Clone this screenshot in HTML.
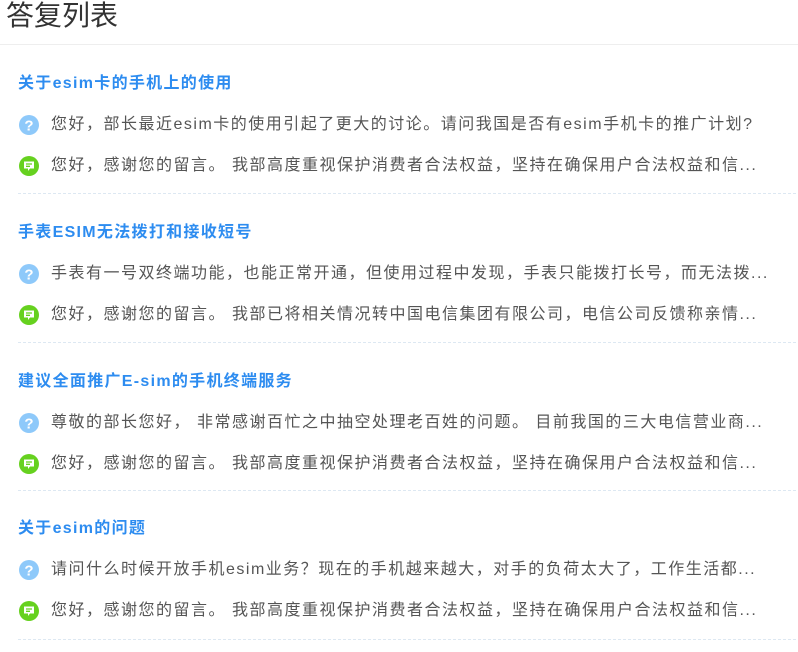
<!DOCTYPE html>
<html><head><meta charset="utf-8"><style>
*{margin:0;padding:0;box-sizing:border-box}
body{width:798px;height:652px;background:#fff;font-family:"Liberation Sans","Noto Sans CJK SC",sans-serif;position:relative;overflow:hidden}
.h{position:absolute;left:6px;top:-2px;font-size:28px;color:#333;line-height:36px}
.hl{position:absolute;left:0;top:44px;width:798px;height:1px;background:#eee}
.it{position:absolute;left:18px;width:778px;height:130px}
.t{position:absolute;left:0;top:0;font-size:16px;font-weight:bold;color:#2d8cf0;line-height:20px;white-space:nowrap;letter-spacing:1.3px}
.r{position:absolute;left:0;font-size:16px;color:#555;line-height:20px;white-space:nowrap}
.r svg{position:absolute;left:1px;top:0}
.r span{position:absolute;left:33px;top:0;letter-spacing:1.5px}
.q{top:41px}.a{top:82px}
.d{position:absolute;left:0;top:120px;width:778px;border-top:1px dashed #dde8f2}
</style></head><body>
<div class="h">答复列表</div><div class="hl"></div>

<div class="it" style="top:74px">
<div class="t">关于esim卡的手机上的使用</div>
<div class="r q"><svg width="20" height="20"><circle cx="10" cy="10" r="10" fill="#8ec9fa"/><text x="10" y="15.5" text-anchor="middle" font-size="15" font-weight="bold" fill="#fff" font-family="Liberation Sans">?</text></svg><span>您好，部长最近esim卡的使用引起了更大的讨论。请问我国是否有esim手机卡的推广计划?</span></div>
<div class="r a"><svg width="20" height="20"><circle cx="10" cy="10" r="10" fill="#66d11f"/><path d="M5 5.5h10v7h-4l-2 2.5v-2.5h-4z" fill="#fff"/><path d="M7 8h6M7 10.3h4" stroke="#66d11f" stroke-width="1.3"/></svg><span>您好，感谢您的留言。 我部高度重视保护消费者合法权益，坚持在确保用户合法权益和信...</span></div>
<div class="d" style="top:119px"></div>
</div>

<div class="it" style="top:223px">
<div class="t">手表ESIM无法拨打和接收短号</div>
<div class="r q"><svg width="20" height="20"><circle cx="10" cy="10" r="10" fill="#8ec9fa"/><text x="10" y="15.5" text-anchor="middle" font-size="15" font-weight="bold" fill="#fff" font-family="Liberation Sans">?</text></svg><span>手表有一号双终端功能，也能正常开通，但使用过程中发现，手表只能拨打长号，而无法拨...</span></div>
<div class="r a"><svg width="20" height="20"><circle cx="10" cy="10" r="10" fill="#66d11f"/><path d="M5 5.5h10v7h-4l-2 2.5v-2.5h-4z" fill="#fff"/><path d="M7 8h6M7 10.3h4" stroke="#66d11f" stroke-width="1.3"/></svg><span>您好，感谢您的留言。 我部已将相关情况转中国电信集团有限公司，电信公司反馈称亲情...</span></div>
<div class="d" style="top:119px"></div>
</div>

<div class="it" style="top:372px">
<div class="t">建议全面推广E-sim的手机终端服务</div>
<div class="r q"><svg width="20" height="20"><circle cx="10" cy="10" r="10" fill="#8ec9fa"/><text x="10" y="15.5" text-anchor="middle" font-size="15" font-weight="bold" fill="#fff" font-family="Liberation Sans">?</text></svg><span>尊敬的部长您好， 非常感谢百忙之中抽空处理老百姓的问题。 目前我国的三大电信营业商...</span></div>
<div class="r a"><svg width="20" height="20"><circle cx="10" cy="10" r="10" fill="#66d11f"/><path d="M5 5.5h10v7h-4l-2 2.5v-2.5h-4z" fill="#fff"/><path d="M7 8h6M7 10.3h4" stroke="#66d11f" stroke-width="1.3"/></svg><span>您好，感谢您的留言。 我部高度重视保护消费者合法权益，坚持在确保用户合法权益和信...</span></div>
<div class="d" style="top:118px"></div>
</div>

<div class="it" style="top:519px">
<div class="t">关于esim的问题</div>
<div class="r q"><svg width="20" height="20"><circle cx="10" cy="10" r="10" fill="#8ec9fa"/><text x="10" y="15.5" text-anchor="middle" font-size="15" font-weight="bold" fill="#fff" font-family="Liberation Sans">?</text></svg><span>请问什么时候开放手机esim业务？现在的手机越来越大，对手的负荷太大了，工作生活都...</span></div>
<div class="r a"><svg width="20" height="20"><circle cx="10" cy="10" r="10" fill="#66d11f"/><path d="M5 5.5h10v7h-4l-2 2.5v-2.5h-4z" fill="#fff"/><path d="M7 8h6M7 10.3h4" stroke="#66d11f" stroke-width="1.3"/></svg><span>您好，感谢您的留言。 我部高度重视保护消费者合法权益，坚持在确保用户合法权益和信...</span></div>
<div class="d" style="top:120px"></div>
</div>
</body></html>
